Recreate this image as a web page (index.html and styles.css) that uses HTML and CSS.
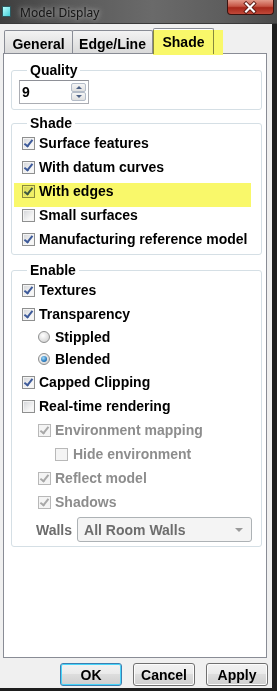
FILE: index.html
```html
<!DOCTYPE html>
<html lang="en">
<head>
    <meta charset="UTF-8">
    <meta name="viewport" content="width=device-width, initial-scale=1.0">
    <title>Model Display</title>
    <link rel="stylesheet" href="styles.css">
</head>
<body>
<div class="window">
    <div class="titlebar">
        <span class="app-icon"></span>
        <span class="title">Model Display</span>
        <span class="close">
            <svg width="47" height="15" viewBox="0 0 47 15">
                <path d="M19.5 3.5 L27.5 11.5 M27.5 3.5 L19.5 11.5" stroke="#5a1a14" stroke-width="4" stroke-linecap="square"/>
                <path d="M19.5 3.5 L27.5 11.5 M27.5 3.5 L19.5 11.5" stroke="#ffffff" stroke-width="2.2" stroke-linecap="square"/>
            </svg>
        </span>
    </div>

    <div class="client">
        <div class="tabs">
            <div class="tab tab-general">General</div>
            <div class="tab tab-edge">Edge/Line</div>
            <div class="tab tab-shade active">Shade<span class="marker tab-marker"></span></div>
        </div>

        <div class="panel">
            <fieldset class="group quality">
                <legend>Quality</legend>
                <div class="spinner">
                    <span class="spin-value">9</span>
                    <span class="spin-btns">
                        <span class="spin-btn up"></span>
                        <span class="spin-btn down"></span>
                    </span>
                </div>
            </fieldset>

            <fieldset class="group shade">
                <legend>Shade</legend>
                <div class="row"><span class="box on"></span>Surface features</div>
                <div class="row"><span class="box on"></span>With datum curves</div>
                <div class="row"><span class="box on"></span>With edges<span class="marker row-marker"></span></div>
                <div class="row"><span class="box"></span>Small surfaces</div>
                <div class="row"><span class="box on"></span>Manufacturing reference model</div>
            </fieldset>

            <fieldset class="group enable">
                <legend>Enable</legend>
                <div class="row"><span class="box on"></span>Textures</div>
                <div class="row"><span class="box on"></span>Transparency</div>
                <div class="row radio-row indent"><span class="radio"></span>Stippled</div>
                <div class="row radio-row indent"><span class="radio on"></span>Blended</div>
                <div class="row"><span class="box on"></span>Capped Clipping</div>
                <div class="row"><span class="box"></span>Real-time rendering</div>
                <div class="row indent disabled"><span class="box on"></span>Environment mapping</div>
                <div class="row indent2 disabled"><span class="box"></span>Hide environment</div>
                <div class="row indent disabled"><span class="box on"></span>Reflect model</div>
                <div class="row indent disabled"><span class="box on"></span>Shadows</div>
                <div class="walls">
                    <span class="walls-label">Walls</span>
                    <span class="select">All Room Walls<span class="select-arrow"></span></span>
                </div>
            </fieldset>
        </div>

        <div class="buttons">
            <button class="btn default">OK</button>
            <button class="btn">Cancel</button>
            <button class="btn">Apply</button>
        </div>
    </div>
</div>
</body>
</html>
```

FILE: styles.css
```css
body {
    margin: 0;
    font-family: "Liberation Sans", Arial, sans-serif;
    font-size: 14px;
    font-weight: bold;
    color: #000;
}

.window {
    width: 277px;
    height: 691px;
    background: #1e1e1e;
    display: flex;
    flex-direction: column;
    overflow: hidden;
}

/* title bar */
.titlebar {
    height: 24px;
    flex: none;
    display: flex;
    align-items: center;
    background: linear-gradient(to right, #3e3e3e, #5a5a5a 25%, #6a6a6a 55%, #5e5e5e 80%, #4a4a4a);
    box-shadow: inset 0 -1px 0 #3a3a3a;
}
.app-icon {
    width: 7px;
    height: 9px;
    margin: -2px 0 0 2px;
    border: 1px solid #2d5a60;
    background: linear-gradient(135deg, #b8ffff, #45cfd8);
}
.title {
    margin-left: 9px;
    font-family: "Noto Sans", "DejaVu Sans", sans-serif;
    font-size: 12px;
    font-weight: normal;
    color: #141414;
    text-shadow: 0 0 5px rgba(255, 255, 255, 0.55), 0 0 10px rgba(255, 255, 255, 0.35);
}
.close {
    margin: 0 3px 0 auto;
    align-self: flex-start;
    width: 47px;
    height: 15px;
    border: 1px solid #3b1410;
    border-top: none;
    border-radius: 0 0 4px 4px;
    background: linear-gradient(#e39a8a, #c65545 45%, #a8281a 55%, #c0493a);
    box-sizing: border-box;
    display: flex;
}
.close svg {
    margin-left: -1px;
}

/* client area */
.client {
    flex: 1;
    margin: 0 5px 3px 0;
    padding: 4px 4px 2px 3px;
    background: #f0f0f0;
    display: flex;
    flex-direction: column;
}

.tabs {
    height: 25px;
    flex: none;
    display: flex;
    align-items: flex-end;
    padding-left: 1px;
    position: relative;
    z-index: 1;
}
.tab {
    height: 23px;
    box-sizing: border-box;
    border: 1px solid #898c95;
    border-bottom: none;
    border-radius: 2px 2px 0 0;
    background: linear-gradient(#f3f3f3, #e6e6e6 50%, #dadada);
    display: flex;
    align-items: center;
    justify-content: center;
    padding-top: 3px;
}
.tab-general { width: 69px; }
.tab-edge { width: 81px; margin-left: -1px; }
.tab-shade { width: 61px; }
.tab.active {
    height: 26px;
    margin-bottom: -1px;
    background: #fff;
    position: relative;
    padding-top: 1px;
}

.marker {
    position: absolute;
    background: #f9f86a;
    mix-blend-mode: multiply;
    pointer-events: none;
}
.tab-marker {
    left: -1px;
    top: 1px;
    width: 70px;
    height: 25px;
}

.panel {
    height: 605px;
    flex: none;
    box-sizing: border-box;
    margin-right: 1px;
    border: 1px solid #898c95;
    background: #fff;
    padding: 8px 4px 0 7px;
}

/* group boxes */
.group {
    margin: 0;
    min-width: 0;
    border: 1px solid #d5dfe5;
    border-radius: 3px;
    padding: 0 8px 5px 10px;
}
.group legend {
    margin-left: 5px;
    padding: 0 3px;
    line-height: 16px;
}
.shade {
    margin-top: 5px;
    padding-bottom: 3px;
}
.enable {
    margin-top: 7px;
    padding-bottom: 4px;
}

/* spinner */
.spinner {
    width: 70px;
    height: 24px;
    box-sizing: border-box;
    margin: 2px 0 0 -3px;
    border: 1px solid #abadb3;
    border-top-color: #8e9097;
    display: flex;
    align-items: center;
    justify-content: space-between;
    padding: 0 1px 0 2px;
}
.spin-btns {
    display: flex;
    flex-direction: column;
    margin-right: 1px;
}
.spin-btn {
    width: 15px;
    height: 9px;
    box-sizing: border-box;
    border: 1px solid #b4bcc8;
    border-radius: 2px;
    background: linear-gradient(#f6f6f6, #e0e0e0);
    display: flex;
    align-items: center;
    justify-content: center;
}
.spin-btn::after {
    content: "";
    border-left: 3px solid transparent;
    border-right: 3px solid transparent;
}
.spin-btn.up::after { border-bottom: 3px solid #4d6185; }
.spin-btn.down::after { border-top: 3px solid #4d6185; }

/* check rows */
.row {
    height: 24px;
    display: flex;
    align-items: center;
    gap: 4px;
    position: relative;
    white-space: nowrap;
}
.radio-row {
    height: 22px;
    gap: 5px;
}
.indent { margin-left: 16px; }
.indent2 { margin-left: 33px; gap: 5px; }

.box {
    width: 13px;
    height: 13px;
    flex: none;
    box-sizing: border-box;
    border: 1px solid #8e8f8f;
    background: linear-gradient(135deg, #d2d4d8, #f6f6f6 70%);
    box-shadow: inset 0 0 0 1px #f4f4f4;
    position: relative;
}
.box.on::after {
    content: "";
    position: absolute;
    left: 3px;
    top: 0;
    width: 3px;
    height: 7px;
    border: solid #3d5a9a;
    border-width: 0 2px 2px 0;
    transform: rotate(38deg);
}

.radio {
    width: 12px;
    height: 12px;
    flex: none;
    box-sizing: border-box;
    border: 1px solid #8e8f8f;
    border-radius: 50%;
    background: radial-gradient(circle at 40% 35%, #ffffff, #d4d4d4 80%);
    display: flex;
    align-items: center;
    justify-content: center;
}
.radio.on::after {
    content: "";
    width: 6px;
    height: 6px;
    border-radius: 50%;
    background: radial-gradient(circle at 40% 35%, #a6dcf8, #2a7cc0 60%, #174f85);
}

.disabled { color: #8d8d8d; }
.disabled .box {
    border-color: #b8b8b8;
    background: #f4f4f4;
}
.disabled .box.on::after { border-color: #a8a8a8; }

.row-marker {
    left: -8px;
    top: 4px;
    width: 237px;
    height: 24px;
}

/* walls combo */
.walls {
    display: flex;
    align-items: center;
    margin: 3px 0 0 14px;
    gap: 5px;
}
.walls-label { color: #6d6d6d; }
.select {
    width: 175px;
    height: 25px;
    box-sizing: border-box;
    border: 1px solid #adb2b5;
    border-radius: 3px;
    background: #f4f4f4;
    color: #6d6d6d;
    padding-left: 6px;
    display: flex;
    align-items: center;
    justify-content: space-between;
}
.select-arrow {
    margin-right: 8px;
    border-left: 4px solid transparent;
    border-right: 4px solid transparent;
    border-top: 4px solid #9a9a9a;
}

/* dialog buttons */
.buttons {
    display: flex;
    justify-content: flex-end;
    gap: 11px;
    margin-top: 5px;
}
.btn {
    width: 62px;
    height: 23px;
    padding: 0;
    font: bold 14px "Liberation Sans", Arial, sans-serif;
    color: #000;
    border: 1px solid #707070;
    border-radius: 3px;
    background: linear-gradient(#f2f2f2, #ebebeb 45%, #dddddd 50%, #cfcfcf);
    box-shadow: inset 0 0 0 1px #fcfcfc;
}
.btn.default {
    border-color: #3c7fb1;
    box-shadow: inset 0 0 0 1px #48d4fa;
}
```
